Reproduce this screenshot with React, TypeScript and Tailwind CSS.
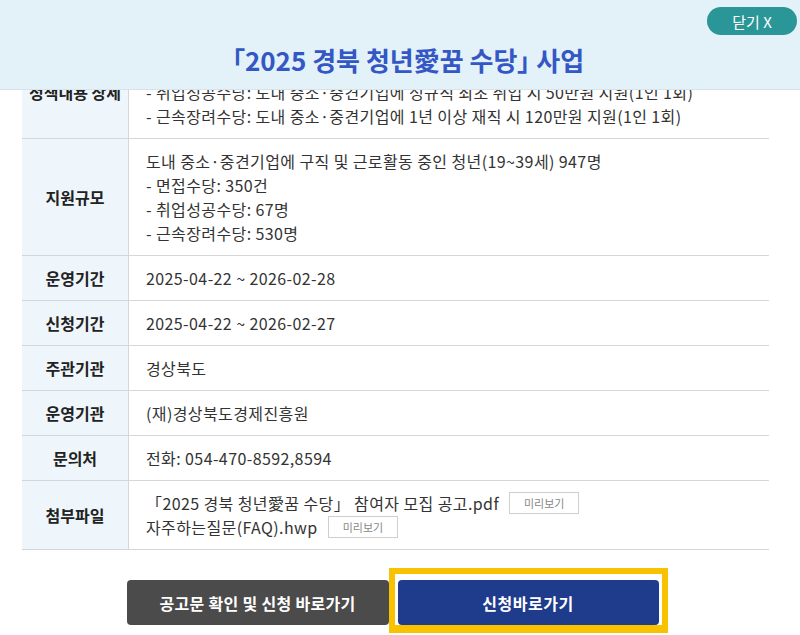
import React from 'react';

interface InfoRow {
  label: string;
  lines: React.ReactNode[];
}

function PreviewButton() {
  return (
    <button className="ml-[10px] h-[22px] px-[14px] border border-[#cfcfcf] bg-white text-[11px] text-[#888] leading-none tracking-normal">
      미리보기
    </button>
  );
}

const rows: InfoRow[] = [
  {
    label: '정책내용 상세',
    lines: [
      '- 면접수당: 도내 중소·중견기업 면접 참여 시 1회 5만원 지원(최대 3회)',
      '- 취업성공수당: 도내 중소·중견기업에 정규직 최초 취업 시 50만원 지원(1인 1회)',
      '- 근속장려수당: 도내 중소·중견기업에 1년 이상 재직 시 120만원 지원(1인 1회)',
    ],
  },
  {
    label: '지원규모',
    lines: [
      '도내 중소·중견기업에 구직 및 근로활동 중인 청년(19~39세) 947명',
      '- 면접수당: 350건',
      '- 취업성공수당: 67명',
      '- 근속장려수당: 530명',
    ],
  },
  { label: '운영기간', lines: ['2025-04-22 ~ 2026-02-28'] },
  { label: '신청기간', lines: ['2025-04-22 ~ 2026-02-27'] },
  { label: '주관기관', lines: ['경상북도'] },
  { label: '운영기관', lines: ['(재)경상북도경제진흥원'] },
  { label: '문의처', lines: ['전화: 054-470-8592,8594'] },
  {
    label: '첨부파일',
    lines: [
      <>
        <span>「2025 경북 청년愛꿈 수당」 참여자 모집 공고.pdf</span>
        <PreviewButton />
      </>,
      <>
        <span>자주하는질문(FAQ).hwp</span>
        <PreviewButton />
      </>,
    ],
  },
];

export default function App() {
  return (
    <div
      className="h-[635px] w-[800px] flex flex-col bg-white overflow-hidden"
      style={{ fontFamily: '"Noto Sans CJK KR", "Noto Sans", sans-serif' }}
    >
      {/* Header */}
      <div className="shrink-0 h-[90px] bg-[#e3f1f9] border-b border-[#d8e2e8] flex flex-col">
        <div className="flex justify-end pt-[7px] pr-[3px]">
          <button className="w-[90px] h-[28px] rounded-full bg-[#2a9698] text-white text-[15px] leading-none">
            닫기 X
          </button>
        </div>
        <h1 className="mt-[10px] pl-[16px] text-center text-[26px] font-bold text-[#3357c4] leading-[30px] [font-feature-settings:'palt']">
          「2025 경북 청년愛꿈 수당」 사업
        </h1>
      </div>

      {/* Scrolled body */}
      <div className="flex-1 overflow-hidden">
        <div className="-mt-[45px] pl-[22px] pr-[31px]">
          <div className="border-t border-[#d6d6d6]">
            {rows.map((row) => (
              <div key={row.label} className="grid grid-cols-[107px_1fr] border-b border-[#d6d6d6]">
                <div className="bg-[#eef6fb] border-r border-[#d6d6d6] flex items-center justify-center text-[16px] font-bold text-[#222]">
                  {row.label}
                </div>
                <div className="py-[10px] pl-[17px] pr-2 text-[16px] text-[#333] tracking-[0.4px]">
                  {row.lines.map((line, i) => (
                    <div key={i} className="h-[24px] flex items-center whitespace-nowrap">
                      {line}
                    </div>
                  ))}
                </div>
              </div>
            ))}
          </div>

          {/* Actions */}
          <div className="mt-[18px] flex justify-center items-start pl-[3px]">
            <button className="mt-[12px] w-[262px] h-[45px] rounded-[4px] bg-[#4b4b4b] text-white text-[16px] font-bold tracking-[0.3px]">
              공고문 확인 및 신청 바로가기
            </button>
            <div className="border-[6px] border-b-[8px] border-[#f8c200] pt-[6px] px-[3px]">
              <button className="block w-[261px] h-[45px] rounded-[4px] bg-[#1f3b8b] text-white text-[16px] font-bold tracking-[0.5px]">
                신청바로가기
              </button>
            </div>
          </div>
        </div>
      </div>
    </div>
  );
}
